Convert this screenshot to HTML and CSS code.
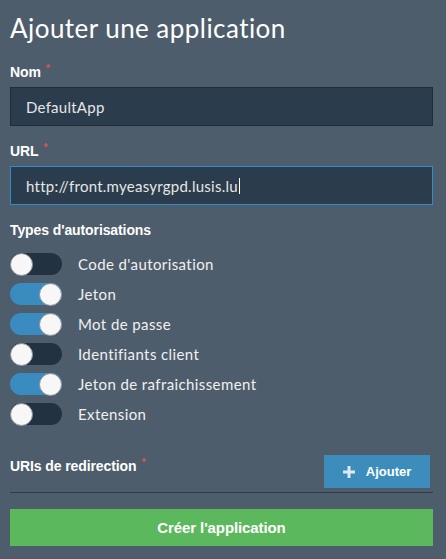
FILE: index.html
```html
<!DOCTYPE html>
<html lang="fr">
<head>
<meta charset="utf-8">
<title>Ajouter une application</title>
<link rel="stylesheet" href="styles.css">
</head>
<body>
<main class="page">
  <h1 class="title">Ajouter une application</h1>

  <div class="field">
    <label class="label">Nom<span class="req">*</span></label>
    <div class="input"><span class="value">DefaultApp</span></div>
  </div>

  <div class="field">
    <label class="label">URL<span class="req">*</span></label>
    <div class="input focused"><span class="value">http://front.myeasyrgpd.lusis.lu</span><span class="caret"></span></div>
  </div>

  <div class="label">Types d'autorisations</div>
  <ul class="toggles">
    <li class="toggle-row"><span class="switch"><span class="knob"></span></span><span class="toggle-label">Code d'autorisation</span></li>
    <li class="toggle-row"><span class="switch on"><span class="knob"></span></span><span class="toggle-label">Jeton</span></li>
    <li class="toggle-row"><span class="switch on"><span class="knob"></span></span><span class="toggle-label">Mot de passe</span></li>
    <li class="toggle-row"><span class="switch"><span class="knob"></span></span><span class="toggle-label">Identifiants client</span></li>
    <li class="toggle-row"><span class="switch on"><span class="knob"></span></span><span class="toggle-label">Jeton de rafraichissement</span></li>
    <li class="toggle-row"><span class="switch"><span class="knob"></span></span><span class="toggle-label">Extension</span></li>
  </ul>

  <div class="redirect-row">
    <div class="label redirect-label">URIs de redirection<span class="req">*</span></div>
    <button class="btn-add" type="button">
      <svg class="plus" width="12" height="12" viewBox="0 0 12 12"><rect x="4.5" y="0" width="3" height="12"/><rect x="0" y="4.5" width="12" height="3"/></svg>
      <span>Ajouter</span>
    </button>
  </div>
  <hr class="sep">

  <button class="btn-create" type="button">Créer l'application</button>
</main>
</body>
</html>
```

FILE: styles.css
```css
html, body {
  margin: 0;
  padding: 0;
  background: #4e5d6c;
}
body {
  font-family: Lato, "Open Sans", sans-serif;
  color: #ebebeb;
  width: 446px;
  height: 559px;
  overflow: hidden;
}
.page {
  padding: 13px 13px 0 10px;
  display: flex;
  flex-direction: column;
}
.title {
  margin: 0 0 19px 0;
  font-size: 26px;
  line-height: 30px;
  font-weight: 400;
  color: #ffffff;
  letter-spacing: 0.45px;
}
.field {
  display: flex;
  flex-direction: column;
  gap: 5px;
  margin-bottom: 15px;
}
.label {
  font-family: "Liberation Sans", Arial, sans-serif;
  font-weight: 700;
  font-size: 14px;
  line-height: 20px;
  color: #ffffff;
  letter-spacing: -0.1px;
}
.req {
  color: #d9534f;
  font-size: 11px;
  vertical-align: top;
  position: relative;
  top: -4px;
  margin-left: 5px;
}
.input {
  box-sizing: border-box;
  height: 39px;
  background: #2b3c4d;
  border: 1px solid #1f2d3a;
  padding: 0 15px;
  display: flex;
  align-items: center;
  font-size: 15px;
  color: #e6e6e6;
  letter-spacing: 0.25px;
}
.input.focused {
  border-color: #2f8ccd;
}
.caret {
  display: inline-block;
  width: 1px;
  height: 16px;
  background: #ffffff;
  margin-left: 1px;
}
.toggles {
  list-style: none;
  margin: 13px 0 0 0;
  padding: 0;
  display: flex;
  flex-direction: column;
  gap: 8px;
}
.toggle-row {
  display: flex;
  align-items: center;
  gap: 16px;
  height: 22px;
}
.switch {
  width: 52px;
  height: 22px;
  border-radius: 11px;
  background: #233241;
  display: flex;
  justify-content: flex-start;
  flex: none;
}
.switch.on {
  background: #3a8bc0;
  justify-content: flex-end;
}
.knob {
  box-sizing: border-box;
  width: 23px;
  height: 23px;
  margin-top: -0.5px;
  border-radius: 50%;
  background: #f7f7f7;
  border: 1px solid #8a8f94;
}
.toggle-label {
  font-size: 15px;
  color: #f0f0f0;
  letter-spacing: 0.4px;
}
.redirect-row {
  margin-top: 30px;
  display: flex;
  justify-content: space-between;
  align-items: flex-start;
}
.redirect-label {
  padding-top: 1px;
}
.btn-add {
  margin-right: 3px;
  width: 106px;
  height: 33px;
  border: 0;
  background: #3c8dbc;
  color: #ffffff;
  font-family: "Liberation Sans", Arial, sans-serif;
  font-weight: 700;
  font-size: 13px;
  display: flex;
  align-items: center;
  justify-content: center;
  gap: 11px;
  padding: 0;
}
.plus {
  fill: #dfe9f1;
}
.sep {
  margin: 4px 0 0 0;
  border: 0;
  height: 1px;
  background: #303c48;
}
.btn-create {
  margin-top: 16px;
  height: 37px;
  border: 0;
  background: #5cb85c;
  color: #ffffff;
  font-family: "Liberation Sans", Arial, sans-serif;
  font-weight: 700;
  font-size: 15px;
  letter-spacing: -0.1px;
}
```
